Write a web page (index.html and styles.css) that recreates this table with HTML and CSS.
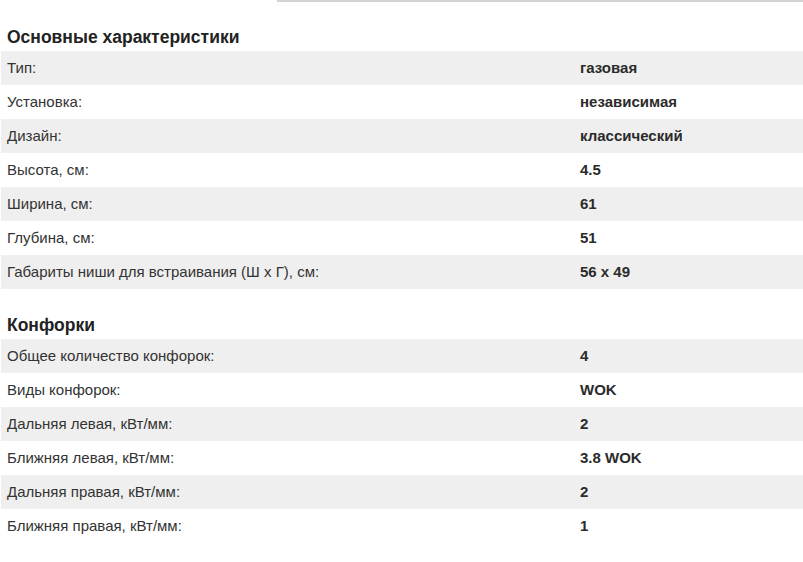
FILE: index.html
```html
<!DOCTYPE html>
<html lang="ru">
<head>
<meta charset="utf-8">
<link rel="stylesheet" href="styles.css">
</head>
<body>
<div class="topline"></div>
<section class="group">
  <h2 class="group-title">Основные характеристики</h2>
  <div class="rows">
    <div class="row"><span class="label">Тип:</span><span class="value">газовая</span></div>
    <div class="row"><span class="label">Установка:</span><span class="value">независимая</span></div>
    <div class="row"><span class="label">Дизайн:</span><span class="value">классический</span></div>
    <div class="row"><span class="label">Высота, см:</span><span class="value">4.5</span></div>
    <div class="row"><span class="label">Ширина, см:</span><span class="value">61</span></div>
    <div class="row"><span class="label">Глубина, см:</span><span class="value">51</span></div>
    <div class="row"><span class="label">Габариты ниши для встраивания (Ш х Г), см:</span><span class="value">56 x 49</span></div>
  </div>
</section>
<section class="group">
  <h2 class="group-title">Конфорки</h2>
  <div class="rows">
    <div class="row"><span class="label">Общее количество конфорок:</span><span class="value">4</span></div>
    <div class="row"><span class="label">Виды конфорок:</span><span class="value">WOK</span></div>
    <div class="row"><span class="label">Дальняя левая, кВт/мм:</span><span class="value">2</span></div>
    <div class="row"><span class="label">Ближняя левая, кВт/мм:</span><span class="value">3.8 WOK</span></div>
    <div class="row"><span class="label">Дальняя правая, кВт/мм:</span><span class="value">2</span></div>
    <div class="row"><span class="label">Ближняя правая, кВт/мм:</span><span class="value">1</span></div>
  </div>
</section>
</body>
</html>
```

FILE: styles.css
```css
html, body {
  margin: 0;
  padding: 0;
  background: #ffffff;
}
body {
  font-family: "Liberation Sans", Arial, sans-serif;
  font-size: 15px;
  color: #333333;
}
.topline {
  margin-left: 277px;
  height: 2px;
  background: #d2d2d2;
}
.group {
  padding-top: 21px;
}
.group + .group {
  padding-top: 22px;
}
.group-title {
  margin: 0;
  padding-left: 7px;
  font-size: 17.5px;
  font-weight: bold;
  line-height: 28px;
  color: #222222;
}
.rows {
  margin-left: 1px;
}
.row {
  box-sizing: border-box;
  display: grid;
  grid-template-columns: 579px 1fr;
  height: 34px;
  padding-bottom: 2px;
  align-items: center;
}
.row:nth-child(odd) {
  background: #efefef;
}
.label {
  padding-left: 6px;
}
.value {
  font-weight: bold;
  color: #2b2b2b;
}
```
